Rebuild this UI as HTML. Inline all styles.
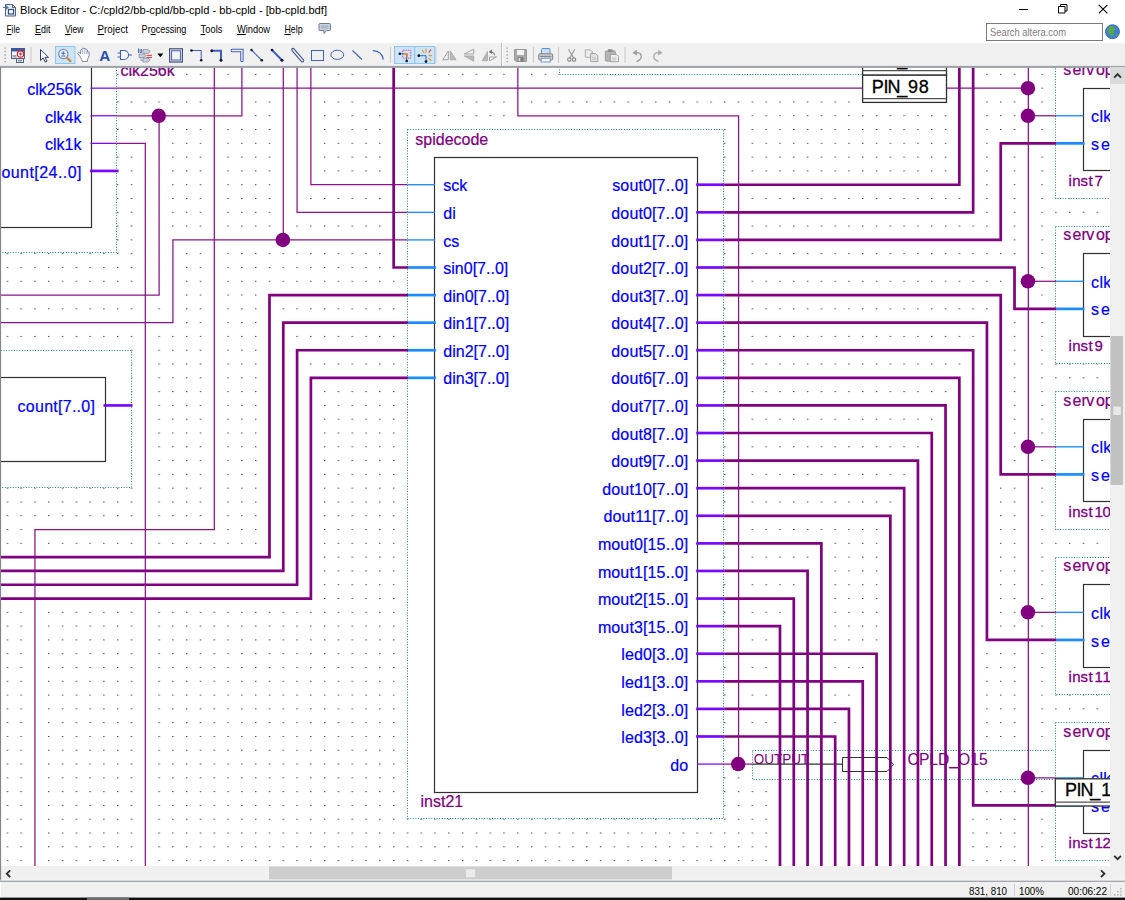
<!DOCTYPE html>
<html lang="en"><head><meta charset="utf-8"><title>Block Editor - bb-cpld.bdf</title>
<style>
html,body{margin:0;padding:0}
body{width:1125px;height:900px;overflow:hidden;background:#fff;position:relative;font-family:"Liberation Sans",Arial,sans-serif;color:#000}
.abs{position:absolute}
#titlebar{left:0;top:0;width:1125px;height:20px;background:#fff}
#menubar{left:0;top:20px;width:1125px;height:23px;background:#fff}
#toolbar{left:0;top:43px;width:1125px;height:23px;background:#f0f0f0}
#tbedge{left:0;top:66px;width:1125px;height:1px;background:#a5a5a5}
#vscroll{left:1110px;top:67px;width:15px;height:799px;background:#f0f0f0}
#hscroll{left:0;top:866px;width:1125px;height:15px;background:#f0f0f0}
#status{left:0;top:881px;width:1125px;height:19px;background:#f0f0f0}
.t{position:absolute;white-space:nowrap;line-height:1}
</style></head><body>

<div id="titlebar" class="abs"></div><div id="menubar" class="abs"></div><div id="toolbar" class="abs"></div><div id="tbedge" class="abs"></div>
<svg id="canvas" width="1110" height="799" viewBox="0 67 1110 799" style="position:absolute;left:0;top:67px;background:#fff" font-family="'Liberation Sans', Arial, sans-serif">
<defs><pattern id="grid" x="6.6" y="4.86" width="13.797" height="13.794" patternUnits="userSpaceOnUse"><rect x="0" y="0" width="1.45" height="1.05" fill="#484848"/></pattern></defs>
<rect x="0" y="67" width="1110" height="799" fill="#fff"/>
<rect x="0" y="67" width="1110" height="799" fill="url(#grid)"/>
<line x1="116.5" y1="88.17" x2="1028.33" y2="88.17" stroke="#fff" stroke-width="2.85"/>
<polyline points="116.5,115.76 241.9,115.76 241.9,62" fill="none" stroke="#fff" stroke-width="2.85"/>
<polyline points="159.12,115.76 159.12,295.08 -2,295.08" fill="none" stroke="#fff" stroke-width="2.85"/>
<polyline points="116.5,143.35 145.32,143.35 145.32,870" fill="none" stroke="#fff" stroke-width="2.85"/>
<polyline points="214.31,62 214.31,529.58 34.94,529.58 34.94,870" fill="none" stroke="#fff" stroke-width="2.85"/>
<polyline points="-2,322.67 172.91,322.67 172.91,239.91 407.46,239.91" fill="none" stroke="#fff" stroke-width="2.85"/>
<line x1="283.29" y1="62" x2="283.29" y2="239.91" stroke="#fff" stroke-width="2.85"/>
<polyline points="297.09,62 297.09,212.32 407.46,212.32" fill="none" stroke="#fff" stroke-width="2.85"/>
<polyline points="310.88,62 310.88,184.73 407.46,184.73" fill="none" stroke="#fff" stroke-width="2.85"/>
<polyline points="517.84,62 517.84,115.76 738.59,115.76 738.59,764.08" fill="none" stroke="#fff" stroke-width="2.85"/>
<line x1="724.3" y1="764.08" x2="752.39" y2="764.08" stroke="#fff" stroke-width="2.85"/>
<line x1="1028.33" y1="62" x2="1028.33" y2="870" stroke="#fff" stroke-width="2.85"/>
<line x1="1028.33" y1="115.76" x2="1056.42" y2="115.76" stroke="#fff" stroke-width="2.85"/>
<line x1="1028.33" y1="281.29" x2="1056.42" y2="281.29" stroke="#fff" stroke-width="2.85"/>
<line x1="1028.33" y1="446.82" x2="1056.42" y2="446.82" stroke="#fff" stroke-width="2.85"/>
<line x1="1028.33" y1="612.35" x2="1056.42" y2="612.35" stroke="#fff" stroke-width="2.85"/>
<line x1="1028.33" y1="777.87" x2="1056.42" y2="777.87" stroke="#fff" stroke-width="2.85"/>
<polyline points="393.67,62 393.67,267.5 407.96,267.5" fill="none" stroke="#fff" stroke-width="4.300000000000001"/>
<polyline points="-3,557.17 269.49,557.17 269.49,295.08 407.96,295.08" fill="none" stroke="#fff" stroke-width="4.300000000000001"/>
<polyline points="-3,570.96 283.29,570.96 283.29,322.67 407.96,322.67" fill="none" stroke="#fff" stroke-width="4.300000000000001"/>
<polyline points="-3,584.76 297.09,584.76 297.09,350.26 407.96,350.26" fill="none" stroke="#fff" stroke-width="4.300000000000001"/>
<polyline points="-3,598.55 310.88,598.55 310.88,377.85 407.96,377.85" fill="none" stroke="#fff" stroke-width="4.300000000000001"/>
<polyline points="724.3,184.73 959.34,184.73 959.34,62" fill="none" stroke="#fff" stroke-width="4.300000000000001"/>
<polyline points="724.3,212.32 973.14,212.32 973.14,62" fill="none" stroke="#fff" stroke-width="4.300000000000001"/>
<polyline points="724.3,239.91 1000.73,239.91 1000.73,143.35 1056.42,143.35" fill="none" stroke="#fff" stroke-width="4.300000000000001"/>
<polyline points="724.3,267.5 1014.53,267.5 1014.53,308.88 1056.42,308.88" fill="none" stroke="#fff" stroke-width="4.300000000000001"/>
<polyline points="724.3,295.08 1000.73,295.08 1000.73,474.41 1056.42,474.41" fill="none" stroke="#fff" stroke-width="4.300000000000001"/>
<polyline points="724.3,322.67 986.94,322.67 986.94,639.93 1056.42,639.93" fill="none" stroke="#fff" stroke-width="4.300000000000001"/>
<polyline points="724.3,350.26 973.14,350.26 973.14,805.46 1056.42,805.46" fill="none" stroke="#fff" stroke-width="4.300000000000001"/>
<polyline points="724.3,377.85 959.34,377.85 959.34,870" fill="none" stroke="#fff" stroke-width="4.300000000000001"/>
<polyline points="724.3,405.44 945.55,405.44 945.55,870" fill="none" stroke="#fff" stroke-width="4.300000000000001"/>
<polyline points="724.3,433.02 931.75,433.02 931.75,870" fill="none" stroke="#fff" stroke-width="4.300000000000001"/>
<polyline points="724.3,460.61 917.95,460.61 917.95,870" fill="none" stroke="#fff" stroke-width="4.300000000000001"/>
<polyline points="724.3,488.2 904.16,488.2 904.16,870" fill="none" stroke="#fff" stroke-width="4.300000000000001"/>
<polyline points="724.3,515.79 890.36,515.79 890.36,870" fill="none" stroke="#fff" stroke-width="4.300000000000001"/>
<polyline points="724.3,543.38 821.37,543.38 821.37,870" fill="none" stroke="#fff" stroke-width="4.300000000000001"/>
<polyline points="724.3,570.96 807.58,570.96 807.58,870" fill="none" stroke="#fff" stroke-width="4.300000000000001"/>
<polyline points="724.3,598.55 793.78,598.55 793.78,870" fill="none" stroke="#fff" stroke-width="4.300000000000001"/>
<polyline points="724.3,626.14 779.98,626.14 779.98,870" fill="none" stroke="#fff" stroke-width="4.300000000000001"/>
<polyline points="724.3,653.73 876.56,653.73 876.56,870" fill="none" stroke="#fff" stroke-width="4.300000000000001"/>
<polyline points="724.3,681.32 862.76,681.32 862.76,870" fill="none" stroke="#fff" stroke-width="4.300000000000001"/>
<polyline points="724.3,708.9 848.97,708.9 848.97,870" fill="none" stroke="#fff" stroke-width="4.300000000000001"/>
<polyline points="724.3,736.49 835.17,736.49 835.17,870" fill="none" stroke="#fff" stroke-width="4.300000000000001"/>
<rect x="-6" y="39" width="122" height="213" fill="#fff"/>
<rect x="-4.5" y="40.5" width="121" height="212" fill="#fff" stroke="#1a8a8a" stroke-width="1" stroke-dasharray="1 1.64"/>
<rect x="-4.5" y="40.5" width="96" height="187" fill="#fff" stroke="#303030" stroke-width="1.2"/>
<text x="81.5" y="95.07" fill="#0000ff" stroke="#0000ff" stroke-width="0.22" font-size="16" text-anchor="end">clk256k</text>
<line x1="90.5" y1="88.17" x2="116.5" y2="88.17" stroke="#7808ff" stroke-width="1.25"/>
<text x="81.5" y="122.66" fill="#0000ff" stroke="#0000ff" stroke-width="0.22" font-size="16" text-anchor="end">clk4k</text>
<line x1="90.5" y1="115.76" x2="116.5" y2="115.76" stroke="#7808ff" stroke-width="1.25"/>
<text x="81.5" y="150.25" fill="#0000ff" stroke="#0000ff" stroke-width="0.22" font-size="16" text-anchor="end">clk1k</text>
<line x1="90.5" y1="143.35" x2="116.5" y2="143.35" stroke="#7808ff" stroke-width="1.25"/>
<text x="-7" y="177.84" fill="#0000ff" stroke="#0000ff" stroke-width="0.22" font-size="16" text-anchor="start" textLength="88.5" lengthAdjust="spacing">count[24..0]</text>
<line x1="90" y1="170.94" x2="118.5" y2="170.94" stroke="#7808ff" stroke-width="2.7"/>
<text x="120.5" y="75.5" fill="#800080" stroke="#800080" stroke-width="0.22" font-size="16" text-anchor="start">clk256k</text>
<rect x="-6" y="349" width="137" height="138" fill="#fff"/>
<rect x="-4.5" y="350.5" width="136" height="137" fill="#fff" stroke="#1a8a8a" stroke-width="1" stroke-dasharray="1 1.64"/>
<rect x="-4.5" y="377.5" width="110" height="84" fill="#fff" stroke="#303030" stroke-width="1.2"/>
<text x="17.6" y="412.14" fill="#0000ff" stroke="#0000ff" stroke-width="0.22" font-size="16" text-anchor="start" textLength="77.3" lengthAdjust="spacing">count[7..0]</text>
<line x1="103.5" y1="405.44" x2="132.5" y2="405.44" stroke="#7808ff" stroke-width="2.7"/>
<rect x="558" y="39" width="304" height="35" fill="#fff"/>
<rect x="559.5" y="40.5" width="303" height="34" fill="#fff" stroke="#1a8a8a" stroke-width="1" stroke-dasharray="1 1.64"/>
<rect x="406" y="128" width="317" height="690" fill="#fff"/>
<rect x="407.5" y="129.5" width="316" height="689" fill="#fff" stroke="#1a8a8a" stroke-width="1" stroke-dasharray="1 1.64"/>
<rect x="434.5" y="157.5" width="263" height="635" fill="#fff" stroke="#303030" stroke-width="1.2"/>
<text x="415.3" y="145" fill="#800080" stroke="#800080" stroke-width="0.22" font-size="16" text-anchor="start">spidecode</text>
<text x="420.5" y="807" fill="#800080" stroke="#800080" stroke-width="0.22" font-size="16" text-anchor="start">inst21</text>
<text x="443.3" y="191.33" fill="#0000ff" stroke="#0000ff" stroke-width="0.22" font-size="16" text-anchor="start">sck</text>
<line x1="407.8" y1="184.73" x2="434.9" y2="184.73" stroke="#1a8cff" stroke-width="1.35"/>
<text x="443.3" y="218.92" fill="#0000ff" stroke="#0000ff" stroke-width="0.22" font-size="16" text-anchor="start">di</text>
<line x1="407.8" y1="212.32" x2="434.9" y2="212.32" stroke="#1a8cff" stroke-width="1.35"/>
<text x="443.3" y="246.51" fill="#0000ff" stroke="#0000ff" stroke-width="0.22" font-size="16" text-anchor="start">cs</text>
<line x1="407.8" y1="239.91" x2="434.9" y2="239.91" stroke="#1a8cff" stroke-width="1.35"/>
<text x="443.3" y="274.1" fill="#0000ff" stroke="#0000ff" stroke-width="0.22" font-size="16" text-anchor="start">sin0[7..0]</text>
<line x1="407.8" y1="267.5" x2="435.9" y2="267.5" stroke="#1a8cff" stroke-width="2.7"/>
<text x="443.3" y="301.68" fill="#0000ff" stroke="#0000ff" stroke-width="0.22" font-size="16" text-anchor="start">din0[7..0]</text>
<line x1="407.8" y1="295.08" x2="435.9" y2="295.08" stroke="#1a8cff" stroke-width="2.7"/>
<text x="443.3" y="329.27" fill="#0000ff" stroke="#0000ff" stroke-width="0.22" font-size="16" text-anchor="start">din1[7..0]</text>
<line x1="407.8" y1="322.67" x2="435.9" y2="322.67" stroke="#1a8cff" stroke-width="2.7"/>
<text x="443.3" y="356.86" fill="#0000ff" stroke="#0000ff" stroke-width="0.22" font-size="16" text-anchor="start">din2[7..0]</text>
<line x1="407.8" y1="350.26" x2="435.9" y2="350.26" stroke="#1a8cff" stroke-width="2.7"/>
<text x="443.3" y="384.45" fill="#0000ff" stroke="#0000ff" stroke-width="0.22" font-size="16" text-anchor="start">din3[7..0]</text>
<line x1="407.8" y1="377.85" x2="435.9" y2="377.85" stroke="#1a8cff" stroke-width="2.7"/>
<text x="688.4" y="191.33" fill="#0000ff" stroke="#0000ff" stroke-width="0.22" font-size="16" text-anchor="end" letter-spacing="0.13">sout0[7..0]</text>
<line x1="696.2" y1="184.73" x2="724.3" y2="184.73" stroke="#7808ff" stroke-width="2.7"/>
<text x="688.4" y="218.92" fill="#0000ff" stroke="#0000ff" stroke-width="0.22" font-size="16" text-anchor="end" letter-spacing="0.13">dout0[7..0]</text>
<line x1="696.2" y1="212.32" x2="724.3" y2="212.32" stroke="#7808ff" stroke-width="2.7"/>
<text x="688.4" y="246.51" fill="#0000ff" stroke="#0000ff" stroke-width="0.22" font-size="16" text-anchor="end" letter-spacing="0.13">dout1[7..0]</text>
<line x1="696.2" y1="239.91" x2="724.3" y2="239.91" stroke="#7808ff" stroke-width="2.7"/>
<text x="688.4" y="274.1" fill="#0000ff" stroke="#0000ff" stroke-width="0.22" font-size="16" text-anchor="end" letter-spacing="0.13">dout2[7..0]</text>
<line x1="696.2" y1="267.5" x2="724.3" y2="267.5" stroke="#7808ff" stroke-width="2.7"/>
<text x="688.4" y="301.68" fill="#0000ff" stroke="#0000ff" stroke-width="0.22" font-size="16" text-anchor="end" letter-spacing="0.13">dout3[7..0]</text>
<line x1="696.2" y1="295.08" x2="724.3" y2="295.08" stroke="#7808ff" stroke-width="2.7"/>
<text x="688.4" y="329.27" fill="#0000ff" stroke="#0000ff" stroke-width="0.22" font-size="16" text-anchor="end" letter-spacing="0.13">dout4[7..0]</text>
<line x1="696.2" y1="322.67" x2="724.3" y2="322.67" stroke="#7808ff" stroke-width="2.7"/>
<text x="688.4" y="356.86" fill="#0000ff" stroke="#0000ff" stroke-width="0.22" font-size="16" text-anchor="end" letter-spacing="0.13">dout5[7..0]</text>
<line x1="696.2" y1="350.26" x2="724.3" y2="350.26" stroke="#7808ff" stroke-width="2.7"/>
<text x="688.4" y="384.45" fill="#0000ff" stroke="#0000ff" stroke-width="0.22" font-size="16" text-anchor="end" letter-spacing="0.13">dout6[7..0]</text>
<line x1="696.2" y1="377.85" x2="724.3" y2="377.85" stroke="#7808ff" stroke-width="2.7"/>
<text x="688.4" y="412.04" fill="#0000ff" stroke="#0000ff" stroke-width="0.22" font-size="16" text-anchor="end" letter-spacing="0.13">dout7[7..0]</text>
<line x1="696.2" y1="405.44" x2="724.3" y2="405.44" stroke="#7808ff" stroke-width="2.7"/>
<text x="688.4" y="439.62" fill="#0000ff" stroke="#0000ff" stroke-width="0.22" font-size="16" text-anchor="end" letter-spacing="0.13">dout8[7..0]</text>
<line x1="696.2" y1="433.02" x2="724.3" y2="433.02" stroke="#7808ff" stroke-width="2.7"/>
<text x="688.4" y="467.21" fill="#0000ff" stroke="#0000ff" stroke-width="0.22" font-size="16" text-anchor="end" letter-spacing="0.13">dout9[7..0]</text>
<line x1="696.2" y1="460.61" x2="724.3" y2="460.61" stroke="#7808ff" stroke-width="2.7"/>
<text x="688.4" y="494.8" fill="#0000ff" stroke="#0000ff" stroke-width="0.22" font-size="16" text-anchor="end" letter-spacing="0.13">dout10[7..0]</text>
<line x1="696.2" y1="488.2" x2="724.3" y2="488.2" stroke="#7808ff" stroke-width="2.7"/>
<text x="688.4" y="522.39" fill="#0000ff" stroke="#0000ff" stroke-width="0.22" font-size="16" text-anchor="end" letter-spacing="0.13">dout11[7..0]</text>
<line x1="696.2" y1="515.79" x2="724.3" y2="515.79" stroke="#7808ff" stroke-width="2.7"/>
<text x="688.4" y="549.98" fill="#0000ff" stroke="#0000ff" stroke-width="0.22" font-size="16" text-anchor="end" letter-spacing="0.13">mout0[15..0]</text>
<line x1="696.2" y1="543.38" x2="724.3" y2="543.38" stroke="#7808ff" stroke-width="2.7"/>
<text x="688.4" y="577.56" fill="#0000ff" stroke="#0000ff" stroke-width="0.22" font-size="16" text-anchor="end" letter-spacing="0.13">mout1[15..0]</text>
<line x1="696.2" y1="570.96" x2="724.3" y2="570.96" stroke="#7808ff" stroke-width="2.7"/>
<text x="688.4" y="605.15" fill="#0000ff" stroke="#0000ff" stroke-width="0.22" font-size="16" text-anchor="end" letter-spacing="0.13">mout2[15..0]</text>
<line x1="696.2" y1="598.55" x2="724.3" y2="598.55" stroke="#7808ff" stroke-width="2.7"/>
<text x="688.4" y="632.74" fill="#0000ff" stroke="#0000ff" stroke-width="0.22" font-size="16" text-anchor="end" letter-spacing="0.13">mout3[15..0]</text>
<line x1="696.2" y1="626.14" x2="724.3" y2="626.14" stroke="#7808ff" stroke-width="2.7"/>
<text x="688.4" y="660.33" fill="#0000ff" stroke="#0000ff" stroke-width="0.22" font-size="16" text-anchor="end" letter-spacing="0.13">led0[3..0]</text>
<line x1="696.2" y1="653.73" x2="724.3" y2="653.73" stroke="#7808ff" stroke-width="2.7"/>
<text x="688.4" y="687.92" fill="#0000ff" stroke="#0000ff" stroke-width="0.22" font-size="16" text-anchor="end" letter-spacing="0.13">led1[3..0]</text>
<line x1="696.2" y1="681.32" x2="724.3" y2="681.32" stroke="#7808ff" stroke-width="2.7"/>
<text x="688.4" y="715.5" fill="#0000ff" stroke="#0000ff" stroke-width="0.22" font-size="16" text-anchor="end" letter-spacing="0.13">led2[3..0]</text>
<line x1="696.2" y1="708.9" x2="724.3" y2="708.9" stroke="#7808ff" stroke-width="2.7"/>
<text x="688.4" y="743.09" fill="#0000ff" stroke="#0000ff" stroke-width="0.22" font-size="16" text-anchor="end" letter-spacing="0.13">led3[3..0]</text>
<line x1="696.2" y1="736.49" x2="724.3" y2="736.49" stroke="#7808ff" stroke-width="2.7"/>
<text x="688.4" y="770.68" fill="#0000ff" stroke="#0000ff" stroke-width="0.22" font-size="16" text-anchor="end" letter-spacing="0.13">do</text>
<line x1="697.2" y1="764.08" x2="724.3" y2="764.08" stroke="#7808ff" stroke-width="1.25"/>
<rect x="751" y="749" width="303" height="30" fill="#fff"/>
<rect x="752.5" y="750.5" width="302" height="29" fill="#fff" stroke="#1a8a8a" stroke-width="1" stroke-dasharray="1 1.64"/>
<text x="753.8" y="764" fill="#800080" stroke="#800080" stroke-width="0" font-size="14.5" text-anchor="start" textLength="55.5" lengthAdjust="spacingAndGlyphs">OUTPUT</text>
<text x="907.6" y="765.3" fill="#800080" stroke="#800080" stroke-width="0.1" font-size="16" text-anchor="start" textLength="80" lengthAdjust="spacingAndGlyphs">CPLD_O15</text>
<line x1="752.39" y1="764.08" x2="842" y2="764.08" stroke="#303030" stroke-width="1.25"/>
<polygon points="842.5,757.5 887,757.5 893.5,764.5 887,771.5 842.5,771.5" fill="#fff" stroke="#303030" stroke-width="1"/>
<rect x="1054" y="59" width="76" height="139" fill="#fff"/>
<rect x="1055.5" y="60.5" width="75" height="138" fill="#fff" stroke="#1a8a8a" stroke-width="1" stroke-dasharray="1 1.64"/>
<rect x="1083.5" y="88.5" width="47" height="82" fill="#fff" stroke="#303030" stroke-width="1.2"/>
<text x="1063.2 1072.4 1081.4 1086.2 1096 1104.8 1115 1124 1128 1136" y="74.79" fill="#800080" stroke="#800080" stroke-width="0.22" font-size="16">servopulse</text>
<text x="1068.5 1072.3 1080.6 1088.6 1094.4 1102.5" y="185.54" fill="#800080" stroke="#800080" stroke-width="0.3" font-size="15">inst7</text>
<text x="1091" y="122.36" fill="#0000ff" stroke="#0000ff" stroke-width="0.22" font-size="16" text-anchor="start" letter-spacing="0.4">clk</text>
<text x="1091 1100.9 1111.5 1117 1126 1135 1140 1149 1153 1158 1167" y="149.95" fill="#0000ff" stroke="#0000ff" stroke-width="0.22" font-size="16">servo[7..0]</text>
<line x1="1056.42" y1="115.76" x2="1083.52" y2="115.76" stroke="#1a8cff" stroke-width="1.35"/>
<line x1="1056.42" y1="143.35" x2="1084.52" y2="143.35" stroke="#1a8cff" stroke-width="2.7"/>
<rect x="1054" y="225" width="76" height="138" fill="#fff"/>
<rect x="1055.5" y="226.5" width="75" height="137" fill="#fff" stroke="#1a8a8a" stroke-width="1" stroke-dasharray="1 1.64"/>
<rect x="1083.5" y="253.5" width="47" height="83" fill="#fff" stroke="#303030" stroke-width="1.2"/>
<text x="1063.2 1072.4 1081.4 1086.2 1096 1104.8 1115 1124 1128 1136" y="240.31" fill="#800080" stroke="#800080" stroke-width="0.22" font-size="16">servopulse</text>
<text x="1068.5 1072.3 1080.6 1088.6 1094.4 1102.5" y="351.07" fill="#800080" stroke="#800080" stroke-width="0.3" font-size="15">inst9</text>
<text x="1091" y="287.89" fill="#0000ff" stroke="#0000ff" stroke-width="0.22" font-size="16" text-anchor="start" letter-spacing="0.4">clk</text>
<text x="1091 1100.9 1111.5 1117 1126 1135 1140 1149 1153 1158 1167" y="315.48" fill="#0000ff" stroke="#0000ff" stroke-width="0.22" font-size="16">servo[7..0]</text>
<line x1="1056.42" y1="281.29" x2="1083.52" y2="281.29" stroke="#1a8cff" stroke-width="1.35"/>
<line x1="1056.42" y1="308.88" x2="1084.52" y2="308.88" stroke="#1a8cff" stroke-width="2.7"/>
<rect x="1054" y="390" width="76" height="139" fill="#fff"/>
<rect x="1055.5" y="391.5" width="75" height="138" fill="#fff" stroke="#1a8a8a" stroke-width="1" stroke-dasharray="1 1.64"/>
<rect x="1083.5" y="419.5" width="47" height="82" fill="#fff" stroke="#303030" stroke-width="1.2"/>
<text x="1063.2 1072.4 1081.4 1086.2 1096 1104.8 1115 1124 1128 1136" y="405.84" fill="#800080" stroke="#800080" stroke-width="0.22" font-size="16">servopulse</text>
<text x="1068.5 1072.3 1080.6 1088.6 1094.4 1102.5" y="516.59" fill="#800080" stroke="#800080" stroke-width="0.3" font-size="15">inst10</text>
<text x="1091" y="453.42" fill="#0000ff" stroke="#0000ff" stroke-width="0.22" font-size="16" text-anchor="start" letter-spacing="0.4">clk</text>
<text x="1091 1100.9 1111.5 1117 1126 1135 1140 1149 1153 1158 1167" y="481.01" fill="#0000ff" stroke="#0000ff" stroke-width="0.22" font-size="16">servo[7..0]</text>
<line x1="1056.42" y1="446.82" x2="1083.52" y2="446.82" stroke="#1a8cff" stroke-width="1.35"/>
<line x1="1056.42" y1="474.41" x2="1084.52" y2="474.41" stroke="#1a8cff" stroke-width="2.7"/>
<rect x="1054" y="556" width="76" height="138" fill="#fff"/>
<rect x="1055.5" y="557.5" width="75" height="137" fill="#fff" stroke="#1a8a8a" stroke-width="1" stroke-dasharray="1 1.64"/>
<rect x="1083.5" y="584.5" width="47" height="83" fill="#fff" stroke="#303030" stroke-width="1.2"/>
<text x="1063.2 1072.4 1081.4 1086.2 1096 1104.8 1115 1124 1128 1136" y="571.37" fill="#800080" stroke="#800080" stroke-width="0.22" font-size="16">servopulse</text>
<text x="1068.5 1072.3 1080.6 1088.6 1094.4 1102.5" y="682.12" fill="#800080" stroke="#800080" stroke-width="0.3" font-size="15">inst11</text>
<text x="1091" y="618.95" fill="#0000ff" stroke="#0000ff" stroke-width="0.22" font-size="16" text-anchor="start" letter-spacing="0.4">clk</text>
<text x="1091 1100.9 1111.5 1117 1126 1135 1140 1149 1153 1158 1167" y="646.53" fill="#0000ff" stroke="#0000ff" stroke-width="0.22" font-size="16">servo[7..0]</text>
<line x1="1056.42" y1="612.35" x2="1083.52" y2="612.35" stroke="#1a8cff" stroke-width="1.35"/>
<line x1="1056.42" y1="639.93" x2="1084.52" y2="639.93" stroke="#1a8cff" stroke-width="2.7"/>
<rect x="1054" y="721" width="76" height="139" fill="#fff"/>
<rect x="1055.5" y="722.5" width="75" height="138" fill="#fff" stroke="#1a8a8a" stroke-width="1" stroke-dasharray="1 1.64"/>
<rect x="1083.5" y="750.5" width="47" height="83" fill="#fff" stroke="#303030" stroke-width="1.2"/>
<text x="1063.2 1072.4 1081.4 1086.2 1096 1104.8 1115 1124 1128 1136" y="736.9" fill="#800080" stroke="#800080" stroke-width="0.22" font-size="16">servopulse</text>
<text x="1068.5 1072.3 1080.6 1088.6 1094.4 1102.5" y="847.65" fill="#800080" stroke="#800080" stroke-width="0.3" font-size="15">inst12</text>
<text x="1091" y="784.47" fill="#0000ff" stroke="#0000ff" stroke-width="0.22" font-size="16" text-anchor="start" letter-spacing="0.4">clk</text>
<text x="1091 1100.9 1111.5 1117 1126 1135 1140 1149 1153 1158 1167" y="812.06" fill="#0000ff" stroke="#0000ff" stroke-width="0.22" font-size="16">servo[7..0]</text>
<line x1="1056.42" y1="777.87" x2="1083.52" y2="777.87" stroke="#1a8cff" stroke-width="1.35"/>
<line x1="1056.42" y1="805.46" x2="1084.52" y2="805.46" stroke="#1a8cff" stroke-width="2.7"/>
<line x1="116.5" y1="88.17" x2="1028.33" y2="88.17" stroke="#8a128a" stroke-width="1.25"/>
<polyline points="116.5,115.76 241.9,115.76 241.9,62" fill="none" stroke="#8a128a" stroke-width="1.25" stroke-linejoin="miter" stroke-linecap="butt"/>
<polyline points="159.12,115.76 159.12,295.08 -2,295.08" fill="none" stroke="#8a128a" stroke-width="1.25" stroke-linejoin="miter" stroke-linecap="butt"/>
<polyline points="116.5,143.35 145.32,143.35 145.32,870" fill="none" stroke="#8a128a" stroke-width="1.25" stroke-linejoin="miter" stroke-linecap="butt"/>
<polyline points="214.31,62 214.31,529.58 34.94,529.58 34.94,870" fill="none" stroke="#8a128a" stroke-width="1.25" stroke-linejoin="miter" stroke-linecap="butt"/>
<polyline points="-2,322.67 172.91,322.67 172.91,239.91 407.46,239.91" fill="none" stroke="#8a128a" stroke-width="1.25" stroke-linejoin="miter" stroke-linecap="butt"/>
<line x1="283.29" y1="62" x2="283.29" y2="239.91" stroke="#8a128a" stroke-width="1.25"/>
<polyline points="297.09,62 297.09,212.32 407.46,212.32" fill="none" stroke="#8a128a" stroke-width="1.25" stroke-linejoin="miter" stroke-linecap="butt"/>
<polyline points="310.88,62 310.88,184.73 407.46,184.73" fill="none" stroke="#8a128a" stroke-width="1.25" stroke-linejoin="miter" stroke-linecap="butt"/>
<polyline points="517.84,62 517.84,115.76 738.59,115.76 738.59,764.08" fill="none" stroke="#8a128a" stroke-width="1.25" stroke-linejoin="miter" stroke-linecap="butt"/>
<line x1="724.3" y1="764.08" x2="752.39" y2="764.08" stroke="#8a128a" stroke-width="1.25"/>
<line x1="1028.33" y1="62" x2="1028.33" y2="870" stroke="#8a128a" stroke-width="1.25"/>
<line x1="1028.33" y1="115.76" x2="1056.42" y2="115.76" stroke="#8a128a" stroke-width="1.25"/>
<line x1="1028.33" y1="281.29" x2="1056.42" y2="281.29" stroke="#8a128a" stroke-width="1.25"/>
<line x1="1028.33" y1="446.82" x2="1056.42" y2="446.82" stroke="#8a128a" stroke-width="1.25"/>
<line x1="1028.33" y1="612.35" x2="1056.42" y2="612.35" stroke="#8a128a" stroke-width="1.25"/>
<line x1="1028.33" y1="777.87" x2="1056.42" y2="777.87" stroke="#8a128a" stroke-width="1.25"/>
<polyline points="393.67,62 393.67,267.5 407.96,267.5" fill="none" stroke="#800080" stroke-width="2.7" stroke-linejoin="miter" stroke-linecap="butt"/>
<polyline points="-3,557.17 269.49,557.17 269.49,295.08 407.96,295.08" fill="none" stroke="#800080" stroke-width="2.7" stroke-linejoin="miter" stroke-linecap="butt"/>
<polyline points="-3,570.96 283.29,570.96 283.29,322.67 407.96,322.67" fill="none" stroke="#800080" stroke-width="2.7" stroke-linejoin="miter" stroke-linecap="butt"/>
<polyline points="-3,584.76 297.09,584.76 297.09,350.26 407.96,350.26" fill="none" stroke="#800080" stroke-width="2.7" stroke-linejoin="miter" stroke-linecap="butt"/>
<polyline points="-3,598.55 310.88,598.55 310.88,377.85 407.96,377.85" fill="none" stroke="#800080" stroke-width="2.7" stroke-linejoin="miter" stroke-linecap="butt"/>
<polyline points="724.3,184.73 959.34,184.73 959.34,62" fill="none" stroke="#800080" stroke-width="2.7" stroke-linejoin="miter" stroke-linecap="butt"/>
<polyline points="724.3,212.32 973.14,212.32 973.14,62" fill="none" stroke="#800080" stroke-width="2.7" stroke-linejoin="miter" stroke-linecap="butt"/>
<polyline points="724.3,239.91 1000.73,239.91 1000.73,143.35 1056.42,143.35" fill="none" stroke="#800080" stroke-width="2.7" stroke-linejoin="miter" stroke-linecap="butt"/>
<polyline points="724.3,267.5 1014.53,267.5 1014.53,308.88 1056.42,308.88" fill="none" stroke="#800080" stroke-width="2.7" stroke-linejoin="miter" stroke-linecap="butt"/>
<polyline points="724.3,295.08 1000.73,295.08 1000.73,474.41 1056.42,474.41" fill="none" stroke="#800080" stroke-width="2.7" stroke-linejoin="miter" stroke-linecap="butt"/>
<polyline points="724.3,322.67 986.94,322.67 986.94,639.93 1056.42,639.93" fill="none" stroke="#800080" stroke-width="2.7" stroke-linejoin="miter" stroke-linecap="butt"/>
<polyline points="724.3,350.26 973.14,350.26 973.14,805.46 1056.42,805.46" fill="none" stroke="#800080" stroke-width="2.7" stroke-linejoin="miter" stroke-linecap="butt"/>
<polyline points="724.3,377.85 959.34,377.85 959.34,870" fill="none" stroke="#800080" stroke-width="2.7" stroke-linejoin="miter" stroke-linecap="butt"/>
<polyline points="724.3,405.44 945.55,405.44 945.55,870" fill="none" stroke="#800080" stroke-width="2.7" stroke-linejoin="miter" stroke-linecap="butt"/>
<polyline points="724.3,433.02 931.75,433.02 931.75,870" fill="none" stroke="#800080" stroke-width="2.7" stroke-linejoin="miter" stroke-linecap="butt"/>
<polyline points="724.3,460.61 917.95,460.61 917.95,870" fill="none" stroke="#800080" stroke-width="2.7" stroke-linejoin="miter" stroke-linecap="butt"/>
<polyline points="724.3,488.2 904.16,488.2 904.16,870" fill="none" stroke="#800080" stroke-width="2.7" stroke-linejoin="miter" stroke-linecap="butt"/>
<polyline points="724.3,515.79 890.36,515.79 890.36,870" fill="none" stroke="#800080" stroke-width="2.7" stroke-linejoin="miter" stroke-linecap="butt"/>
<polyline points="724.3,543.38 821.37,543.38 821.37,870" fill="none" stroke="#800080" stroke-width="2.7" stroke-linejoin="miter" stroke-linecap="butt"/>
<polyline points="724.3,570.96 807.58,570.96 807.58,870" fill="none" stroke="#800080" stroke-width="2.7" stroke-linejoin="miter" stroke-linecap="butt"/>
<polyline points="724.3,598.55 793.78,598.55 793.78,870" fill="none" stroke="#800080" stroke-width="2.7" stroke-linejoin="miter" stroke-linecap="butt"/>
<polyline points="724.3,626.14 779.98,626.14 779.98,870" fill="none" stroke="#800080" stroke-width="2.7" stroke-linejoin="miter" stroke-linecap="butt"/>
<polyline points="724.3,653.73 876.56,653.73 876.56,870" fill="none" stroke="#800080" stroke-width="2.7" stroke-linejoin="miter" stroke-linecap="butt"/>
<polyline points="724.3,681.32 862.76,681.32 862.76,870" fill="none" stroke="#800080" stroke-width="2.7" stroke-linejoin="miter" stroke-linecap="butt"/>
<polyline points="724.3,708.9 848.97,708.9 848.97,870" fill="none" stroke="#800080" stroke-width="2.7" stroke-linejoin="miter" stroke-linecap="butt"/>
<polyline points="724.3,736.49 835.17,736.49 835.17,870" fill="none" stroke="#800080" stroke-width="2.7" stroke-linejoin="miter" stroke-linecap="butt"/>
<circle cx="158.72" cy="115.76" r="7.25" fill="#800080"/>
<circle cx="282.89" cy="239.91" r="7.25" fill="#800080"/>
<circle cx="738.19" cy="764.08" r="7.25" fill="#800080"/>
<circle cx="1027.93" cy="88.17" r="7.25" fill="#800080"/>
<circle cx="1027.93" cy="115.76" r="7.25" fill="#800080"/>
<circle cx="1027.93" cy="281.29" r="7.25" fill="#800080"/>
<circle cx="1027.93" cy="446.82" r="7.25" fill="#800080"/>
<circle cx="1027.93" cy="612.35" r="7.25" fill="#800080"/>
<circle cx="1027.93" cy="777.87" r="7.25" fill="#800080"/>
<rect x="862.6" y="45" width="83.9" height="30.2" fill="#fff" stroke="#303030" stroke-width="1.3"/>
<line x1="862.6" y1="70.6" x2="946.5" y2="70.6" stroke="#505050" stroke-width="1.2"/>
<text x="871.8 883.5 887.4 897.2 908.1 918.7" y="64.7" fill="#000" stroke="#000" stroke-width="0.3" font-size="18">PIN_97</text>
<rect x="862.6" y="75.2" width="83.9" height="27.2" fill="#fff" stroke="#303030" stroke-width="1.3"/>
<line x1="862.6" y1="98.6" x2="946.5" y2="98.6" stroke="#505050" stroke-width="1.2"/>
<text x="871.8 883.5 887.4 897.2 908.1 918.7" y="92.7" fill="#000" stroke="#000" stroke-width="0.3" font-size="18">PIN_98</text>
<rect x="1055.3" y="778.8" width="84.7" height="27.2" fill="#fff" stroke="#303030" stroke-width="1.3"/>
<line x1="1055.3" y1="802.2" x2="1140" y2="802.2" stroke="#505050" stroke-width="1.2"/>
<text x="1064.9 1076.6 1080.5 1090.3 1101.2 1111.8 1122.4" y="795.8" fill="#000" stroke="#000" stroke-width="0.3" font-size="18">PIN_100</text>
</svg>
<div id="vscroll" class="abs"></div><div id="hscroll" class="abs"></div><div id="status" class="abs"></div>
<svg id="chrome" width="1125" height="900" viewBox="0 0 1125 900" style="position:absolute;left:0;top:0;pointer-events:none" font-family="'Liberation Sans', Arial, sans-serif">
<g id="appicon"><path d="M5.5 4.5h7l3 3v8.5h-10z" fill="#e8eef6" stroke="#51627a" stroke-width="1"/><path d="M12.5 4.5v3h3" fill="none" stroke="#51627a" stroke-width="1"/><rect x="8.5" y="9.5" width="5" height="4.5" fill="#fff" stroke="#2f4d7c" stroke-width="1.2"/><path d="M3 7.5h5m-2-1.8l2 1.8l-2 1.8" fill="none" stroke="#4a78b8" stroke-width="1.1"/></g>
<text x="20" y="13.6" font-size="10.3" fill="#000" textLength="307" lengthAdjust="spacingAndGlyphs">Block Editor - C:/cpld2/bb-cpld/bb-cpld - bb-cpld - [bb-cpld.bdf]</text>
<path d="M1019 9.5h9" stroke="#000" stroke-width="1"/>
<path d="M1058.5 6.5h6.5v6.5h-6.5z M1060.5 6.5v-2h6.5v6.5h-2" fill="none" stroke="#000" stroke-width="1"/>
<path d="M1098.8 4.8l8.6 8.6m0-8.6l-8.6 8.6" stroke="#000" stroke-width="1.1" fill="none"/>
<text x="6.4" y="33" font-size="10.3" fill="#000" textLength="13.6" lengthAdjust="spacingAndGlyphs"><tspan text-decoration="underline">F</tspan>ile</text>
<text x="35" y="33" font-size="10.3" fill="#000" textLength="15.4" lengthAdjust="spacingAndGlyphs"><tspan text-decoration="underline">E</tspan>dit</text>
<text x="65" y="33" font-size="10.3" fill="#000" textLength="18.6" lengthAdjust="spacingAndGlyphs"><tspan text-decoration="underline">V</tspan>iew</text>
<text x="97.6" y="33" font-size="10.3" fill="#000" textLength="30.4" lengthAdjust="spacingAndGlyphs"><tspan text-decoration="underline">P</tspan>roject</text>
<text x="141.6" y="33" font-size="10.3" fill="#000" textLength="44.8" lengthAdjust="spacingAndGlyphs">Pr<tspan text-decoration="underline">o</tspan>cessing</text>
<text x="200.6" y="33" font-size="10.3" fill="#000" textLength="21.8" lengthAdjust="spacingAndGlyphs"><tspan text-decoration="underline">T</tspan>ools</text>
<text x="237" y="33" font-size="10.3" fill="#000" textLength="33.0" lengthAdjust="spacingAndGlyphs"><tspan text-decoration="underline">W</tspan>indow</text>
<text x="284.4" y="33" font-size="10.3" fill="#000" textLength="18.2" lengthAdjust="spacingAndGlyphs"><tspan text-decoration="underline">H</tspan>elp</text>
<path d="M320 23.5h9.5q1 0 1 1v5q0 1 -1 1h-3l-2.5 3v-3h-4q-1 0 -1 -1v-5q0 -1 1 -1z" fill="#c9d3e3" stroke="#6c7a92" stroke-width="1"/>
<path d="M321 26h7.5M321 28h7.5" stroke="#8b98ad" stroke-width="0.8"/>
<rect x="986.5" y="23.5" width="116" height="17" fill="#fff" stroke="#7a7a7a" stroke-width="1"/>
<text x="990" y="36" font-size="10.3" fill="#7d7d7d" textLength="76" lengthAdjust="spacingAndGlyphs">Search altera.com</text>
<circle cx="1112.5" cy="31.7" r="7" fill="#3d7fd6" stroke="#2a5ea8" stroke-width="0.8"/>
<path d="M1108.5 27.5q3-2.5 5.5-0.5l1.5 2.5l-2 1.5l0.5 3l-2.5 3.5l-1.5-3.5l-2.5-1.5z" fill="#58a845"/>
<path d="M1116 33l2 1l-1.5 3z" fill="#58a845"/>
<rect x="4.5" y="47.5" width="1.2" height="1.2" fill="#8a8a8a"/>
<rect x="4.5" y="50.9" width="1.2" height="1.2" fill="#8a8a8a"/>
<rect x="4.5" y="54.3" width="1.2" height="1.2" fill="#8a8a8a"/>
<rect x="4.5" y="57.7" width="1.2" height="1.2" fill="#8a8a8a"/>
<rect x="4.5" y="61.1" width="1.2" height="1.2" fill="#8a8a8a"/>
<rect x="506.5" y="47.5" width="1.2" height="1.2" fill="#8a8a8a"/>
<rect x="506.5" y="50.9" width="1.2" height="1.2" fill="#8a8a8a"/>
<rect x="506.5" y="54.3" width="1.2" height="1.2" fill="#8a8a8a"/>
<rect x="506.5" y="57.7" width="1.2" height="1.2" fill="#8a8a8a"/>
<rect x="506.5" y="61.1" width="1.2" height="1.2" fill="#8a8a8a"/>
<path d="M31 47v16" stroke="#c8c8c8" stroke-width="1"/>
<path d="M390.5 47v16" stroke="#c8c8c8" stroke-width="1"/>
<path d="M436 47v16" stroke="#c8c8c8" stroke-width="1"/>
<path d="M533.5 47v16" stroke="#c8c8c8" stroke-width="1"/>
<path d="M558.5 47v16" stroke="#c8c8c8" stroke-width="1"/>
<path d="M625 47v16" stroke="#c8c8c8" stroke-width="1"/>
<path d="M501.5 43v23" stroke="#bdbdbd" stroke-width="1"/><path d="M502.5 43v23" stroke="#fff" stroke-width="1"/>
<rect x="55.5" y="46.5" width="19.5" height="17" fill="#cce4f7" stroke="#8fc4f0" stroke-width="1"/>
<rect x="394.5" y="46.5" width="20.2" height="17" fill="#cce4f7" stroke="#8fc4f0" stroke-width="1"/>
<rect x="414.7" y="46.5" width="20" height="17" fill="#cce4f7" stroke="#8fc4f0" stroke-width="1"/>
<g><rect x="11.5" y="48.5" width="13" height="10" fill="#f4f6fa" stroke="#53617a"/><rect x="11.5" y="48.5" width="13" height="2.5" fill="#3c5a9a" stroke="#3c5a9a"/><circle cx="20.5" cy="54" r="3.2" fill="#fff" stroke="#d02030" stroke-width="1.2"/><path d="M19 54h3.4M20.7 52.4v3.2" stroke="#d02030" stroke-width="1"/><rect x="12.5" y="55" width="4" height="2.5" fill="#9aa6b8"/><rect x="16.5" y="58.5" width="7" height="4" fill="#e8ecf3" stroke="#53617a"/><rect x="18" y="59.8" width="4" height="1.5" fill="#7d8aa0"/></g>
<path d="M40.5 49.5v11l2.7-2.4l2 4l1.8-0.9l-2-3.9h3.5z" fill="#fff" stroke="#2c3f78" stroke-width="1"/>
<circle cx="63.3" cy="54" r="4.6" fill="#e9f1fb" stroke="#8190a8" stroke-width="1.3"/><path d="M61.3 53.2h4M63.3 51.4v3.4M61.3 56h4" stroke="#3457b2" stroke-width="0.9"/><path d="M67.4 58.2l3 2.9" stroke="#c98a3c" stroke-width="2.3" stroke-linecap="round"/>
<path d="M80 56.5l-2-2.5q-0.8-1.3 0.4-1.6q1-0.1 2.2 1.4v-3.5q0.3-1.2 1.5-0.6v-1q0.7-1.3 1.8-0.2v0.4q0.9-1.2 1.9 0v1q1-0.9 1.7 0.2v2q0.9-1 1.7 0.1q0.5 4 -1.4 6.5l-0.5 2.8h-5l-0.6-2.2z" fill="#fff" stroke="#7c8cab" stroke-width="1"/><path d="M82.3 50v4M84.3 49.3v4.7M86.3 50.3v3.7M88 52.5v2" stroke="#9aa7c0" stroke-width="0.8"/>
<text x="99.3" y="61.3" font-size="14.5" font-weight="bold" fill="#2b4fb8" textLength="11" lengthAdjust="spacingAndGlyphs">A</text>
<path d="M117.5 53h3M117.5 57h3M129 55h3" stroke="#3f5fc4" stroke-width="1"/><path d="M120.5 50.5h3.5a4.5 4.5 0 0 1 0 9h-3.5z" fill="#fff" stroke="#3f5fc4" stroke-width="1.1"/>
<g><path d="M138.5 48.5v4.5M140 49v3.5h1.5v-3.5" stroke="#3f5fc4" stroke-width="0.9" fill="none"/><path d="M143 49.5h5l2.2 2l-2.2 2h-5z" fill="#c9ced8" stroke="#8b93a3" stroke-width="0.8"/><path d="M139 54h5l2 1.8l-2 1.8h-5z" fill="#c9ced8" stroke="#8b93a3" stroke-width="0.8"/><path d="M143 58h5l2.2 2l-2.2 2h-5z" fill="#c9ced8" stroke="#8b93a3" stroke-width="0.8"/><path d="M146.5 55.3h5.5M146.5 57.6h5.5" stroke="#e03030" stroke-width="1"/><path d="M141 57.5v3h2" stroke="#8b93a3" stroke-width="0.8" fill="none"/></g>
<path d="M157.3 53.6h6l-3 3.6z" fill="#000"/>
<rect x="169.6" y="48.8" width="12.8" height="13.2" fill="#e6ecf8" stroke="#4a4f66" stroke-width="1.2"/><rect x="171.6" y="50.8" width="8.8" height="9.2" fill="#f8f8f8" stroke="#3f5fc4" stroke-width="1"/>
<path d="M191.5 50.5h9.7v9.5" fill="none" stroke="#3f5fc4" stroke-width="1"/><circle cx="191.5" cy="50.5" r="1.3" fill="#10182c"/><circle cx="201.2" cy="60.2" r="1.3" fill="#10182c"/>
<path d="M211.8 50.7h9.2v9.5" fill="none" stroke="#3f5fc4" stroke-width="2"/><circle cx="211.8" cy="50.7" r="1.5" fill="#10182c"/><circle cx="221" cy="60.3" r="1.5" fill="#10182c"/>
<path d="M232.3 50.5h9.6v10" fill="none" stroke="#3f5fc4" stroke-width="3.4" stroke-linecap="round"/><path d="M232.3 50.5h9.6v10" fill="none" stroke="#eef2fb" stroke-width="1.4" stroke-linecap="round"/>
<path d="M251.5 50l10.3 10.3" stroke="#3f5fc4" stroke-width="1.1"/><circle cx="251.5" cy="50" r="1.2" fill="#10182c"/><circle cx="261.8" cy="60.3" r="1.3" fill="#10182c"/>
<path d="M272 50l10 10.3" stroke="#3f5fc4" stroke-width="2"/><circle cx="272" cy="50" r="1.3" fill="#10182c"/><circle cx="282" cy="60.3" r="1.5" fill="#10182c"/>
<path d="M293 49.7l9.5 11" stroke="#3a4e8c" stroke-width="3.6" stroke-linecap="round"/><path d="M293 49.7l9.5 11" stroke="#f2f5fc" stroke-width="1.5" stroke-linecap="round"/>
<rect x="311.5" y="50.5" width="12" height="10" fill="none" stroke="#3f5fc4" stroke-width="1"/>
<ellipse cx="337.3" cy="54.8" rx="6.4" ry="4.6" fill="none" stroke="#3f5fc4" stroke-width="1"/>
<path d="M352.5 50.5l9.5 9" stroke="#3f5fc4" stroke-width="1.1"/>
<path d="M372.8 50.6q9.5 0.5 10.4 9" fill="none" stroke="#3f5fc4" stroke-width="1.1"/>
<rect x="402.8" y="50.2" width="8" height="8" fill="none" stroke="#d0508c" stroke-width="1" stroke-dasharray="1.5 1"/><path d="M399.8 53.8h6.8v7" fill="none" stroke="#3f5fc4" stroke-width="1"/><path d="M404 54h3.2v3.5" fill="none" stroke="#f09020" stroke-width="1.6"/><circle cx="399.8" cy="53.8" r="1.3" fill="#10182c"/><circle cx="406.7" cy="61" r="1.3" fill="#10182c"/>
<path d="M418.8 55.7h7.2v6" fill="none" stroke="#3f5fc4" stroke-width="1"/><circle cx="418.8" cy="55.7" r="1.4" fill="#10182c"/><circle cx="426" cy="61.6" r="1.4" fill="#10182c"/><path d="M422 50l2.3 3M426 48.8v3.6" stroke="#f09020" stroke-width="1.2"/><path d="M431 49.5l-2.3 3" stroke="#e03050" stroke-width="1.2"/><path d="M428.7 55.6h3.3M428.5 58.2l2.8 2.6" stroke="#f09020" stroke-width="1.2"/>
<path d="M448.3 51v8.7h-5.5z" fill="#f4f4f4" stroke="#9a9a9a" stroke-width="0.9"/><path d="M450.3 51v8.7h5.7z" fill="#b9b9b9" stroke="#a8a8a8" stroke-width="0.9"/>
<path d="M464.3 54h9.4v-4.8z" fill="#f4f4f4" stroke="#9a9a9a" stroke-width="0.9"/><path d="M464.3 56h9.4v5.2z" fill="#b9b9b9" stroke="#a8a8a8" stroke-width="0.9"/>
<path d="M487.5 51.5v9.3h-5.3z" fill="#b9b9b9" stroke="#a8a8a8" stroke-width="0.9"/><path d="M489.5 57h7l-7 3.8z" fill="#f4f4f4" stroke="#9a9a9a" stroke-width="0.9"/><path d="M489.5 52q4-0.5 5.2 3.2" fill="none" stroke="#8a8a8a" stroke-width="1.2"/><path d="M491.8 49.3l-2.8 2.7l3 1.9z" fill="#6a6a6a"/>
<path d="M514.5 49.5h12v12h-10.5l-1.5-1.5z" fill="#a9a9a9" stroke="#9a9a9a" stroke-width="1"/><rect x="517" y="50" width="7" height="5" fill="#f2f2f2"/><rect x="517.5" y="57" width="6" height="4.5" fill="#7f7f7f"/><rect x="518.5" y="58" width="1.8" height="3" fill="#e0e0e0"/>
<path d="M541.5 54v-4.5q0-1 1-1h6.5q1 0 1 1v4.5" fill="#c9defa" stroke="#5b8fdc" stroke-width="1"/><rect x="538.7" y="53.8" width="14" height="6.2" rx="1.2" fill="#d4d4d4" stroke="#7c7c7c" stroke-width="1"/><rect x="541.2" y="58.2" width="9" height="3.8" fill="#f7fbff" stroke="#5b8fdc" stroke-width="0.9"/><path d="M540 56.3h11.5" stroke="#6b6b6b" stroke-width="0.9"/>
<path d="M568.5 49.3l5 8.6M574.8 49.3l-5 8.6" stroke="#9c9c9c" stroke-width="1.2" fill="none"/><circle cx="569.3" cy="59.6" r="1.7" fill="none" stroke="#8d8d8d" stroke-width="1.2"/><circle cx="574" cy="59.6" r="1.7" fill="none" stroke="#8d8d8d" stroke-width="1.2"/>
<path d="M585.3 49.8h5l2 2v5.5h-7z" fill="#ececec" stroke="#a5a5a5" stroke-width="0.9"/><path d="M590.6 53.6h5l2.2 2v6h-7.2z" fill="#e4e4e4" stroke="#9c9c9c" stroke-width="0.9"/><path d="M592 57.5h4M592 59.3h4" stroke="#b5b5b5" stroke-width="0.7"/>
<rect x="605.3" y="50.8" width="10" height="10.4" rx="1" fill="#b5b5b5" stroke="#9a9a9a" stroke-width="0.9"/><rect x="608" y="49.3" width="4.6" height="2.6" fill="#8c8c8c"/><path d="M610.3 54.4h6l2.2 2v5.4h-8.2z" fill="#ececec" stroke="#9c9c9c" stroke-width="0.9"/><path d="M611.8 58h4.5M611.8 59.8h4.5" stroke="#b5b5b5" stroke-width="0.7"/>
<path d="M636.5 61.5q5.8-1.8 4.5-6.6q-1.2-2.8-5.2-2.2" fill="none" stroke="#a0a0a0" stroke-width="1.4"/><path d="M636.7 49.6l-4.4 3.5l4.8 2.3z" fill="#a0a0a0"/>
<path d="M658.5 61.5q-5.8-1.8-4.5-6.6q1.2-2.8 5.2-2.2" fill="none" stroke="#adadad" stroke-width="1.4"/><path d="M658.3 49.6l4.4 3.5l-4.8 2.3z" fill="#adadad"/>
<rect x="0" y="65.9" width="1125" height="2" fill="#9da1a8"/>
<rect x="1110" y="67" width="15" height="799" fill="#f0f0f0"/>
<rect x="1110" y="67" width="15" height="17" fill="#dadada"/>
<rect x="1110.5" y="336" width="12.5" height="149" fill="#c1c1c1"/>
<rect x="1113.3" y="406.5" width="7.6" height="8.5" fill="#e9e9e9"/>
<path d="M1114.2 77.6l3.4-3.4l3.4 3.4" fill="none" stroke="#303030" stroke-width="1.9"/>
<path d="M1114.2 855.8l3.4 3.4l3.4-3.4" fill="none" stroke="#303030" stroke-width="1.9"/>
<rect x="0" y="866" width="1125" height="15" fill="#f0f0f0"/>
<rect x="269" y="866.5" width="403" height="13" fill="#cdcdcd"/>
<rect x="466" y="869.2" width="9.2" height="8" fill="#ebebeb"/>
<path d="M10.2 870.3l-3.4 3.4l3.4 3.4" fill="none" stroke="#303030" stroke-width="1.9"/>
<path d="M1101 870.3l3.4 3.4l-3.4 3.4" fill="none" stroke="#303030" stroke-width="1.9"/>
<rect x="0" y="67" width="1.1" height="815" fill="#85858d"/>
<rect x="0" y="879.8" width="1125" height="1" fill="#fbfbfb"/>
<rect x="0" y="880.6" width="1125" height="1.4" fill="#a3a7b2"/>
<rect x="0" y="882" width="1125" height="18" fill="#f0f0f0"/><rect x="0" y="882" width="1" height="16" fill="#fff"/>
<rect x="0" y="897.6" width="1125" height="2.4" fill="#101010"/><rect x="87" y="897.6" width="42" height="2.4" fill="#6c6c6c"/>
<path d="M1014.5 884v12" stroke="#d0d0d0" stroke-width="1"/>
<path d="M1110.5 884v12" stroke="#d0d0d0" stroke-width="1"/>
<text x="969" y="894.6" font-size="10.3" fill="#000" textLength="38" lengthAdjust="spacingAndGlyphs">831, 810</text>
<text x="1019" y="894.6" font-size="10.3" fill="#000" textLength="25" lengthAdjust="spacingAndGlyphs">100%</text>
<text x="1068" y="894.6" font-size="10.3" fill="#000" textLength="39" lengthAdjust="spacingAndGlyphs">00:06:22</text>
<rect x="1120" y="888" width="1.6" height="1.6" fill="#b8b8b8"/>
<rect x="1117" y="891" width="1.6" height="1.6" fill="#b8b8b8"/>
<rect x="1120" y="891" width="1.6" height="1.6" fill="#b8b8b8"/>
<rect x="1114" y="894" width="1.6" height="1.6" fill="#b8b8b8"/>
<rect x="1117" y="894" width="1.6" height="1.6" fill="#b8b8b8"/>
<rect x="1120" y="894" width="1.6" height="1.6" fill="#b8b8b8"/>
</svg>
</body></html>
